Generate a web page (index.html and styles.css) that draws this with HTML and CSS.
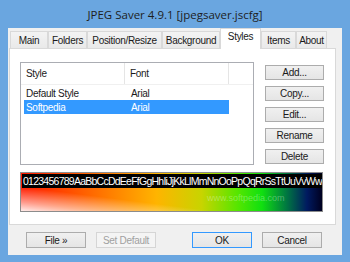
FILE: index.html
```html
<!DOCTYPE html>
<html>
<head>
<meta charset="utf-8">
<link rel="stylesheet" href="styles.css">
</head>
<body>
<div class="window">
  <div class="titlebar">JPEG Saver 4.9.1 [jpegsaver.jscfg]</div>
  <div class="client">
    <div class="tabs">
      <div class="tab w-main">Main</div>
      <div class="tab w-folders">Folders</div>
      <div class="tab w-pos">Position/Resize</div>
      <div class="tab w-bg">Background</div>
      <div class="tab active w-styles">Styles</div>
      <div class="tab w-items">Items</div>
      <div class="tab w-about">About</div>
    </div>
    <div class="panel">
      <div class="list">
        <div class="list-head">
          <div class="hcol c1">Style</div>
          <div class="hcol c2">Font</div>
        </div>
        <div class="row">
          <div class="cell c1">Default Style</div>
          <div class="cell c2">Arial</div>
        </div>
        <div class="row selected">
          <div class="cell c1">Softpedia</div>
          <div class="cell c2">Arial</div>
        </div>
      </div>
      <div class="side-buttons">
        <div class="btn">Add...</div>
        <div class="btn">Copy...</div>
        <div class="btn">Edit...</div>
        <div class="btn">Rename</div>
        <div class="btn">Delete</div>
      </div>
      <div class="preview">
        <div class="sample">0123456789AaBbCcDdEeFfGgHhIiJjKkLlMmNnOoPpQqRrSsTtUuVvWwXxYyZz</div>
        <div class="watermark">www.softpedia.com</div>
      </div>
    </div>
    <div class="bottom">
      <div class="btn wide">File »</div>
      <div class="btn wide disabled">Set Default</div>
      <div class="spacer"></div>
      <div class="btn wide default">OK</div>
      <div class="btn wide">Cancel</div>
    </div>
  </div>
</div>
</body>
</html>
```

FILE: styles.css
```css
* { box-sizing: border-box; }
html, body { margin: 0; padding: 0; }
body {
  width: 350px;
  height: 262px;
  overflow: hidden;
  font-family: "Liberation Sans", Arial, sans-serif;
  font-size: 10px;
  letter-spacing: -0.3px;
  color: #1a1a1a;
}
.window {
  width: 350px;
  height: 262px;
  background: #6aa6e0;
  display: flex;
  flex-direction: column;
}
.titlebar {
  height: 28px;
  display: flex;
  align-items: center;
  justify-content: center;
  font-family: "Open Sans", "Noto Sans", sans-serif;
  font-size: 11.5px;
  letter-spacing: 0;
  color: #1e1e1e;
  padding-top: 1px;
}
.client {
  margin: 0 8px 7px 8px;
  flex: 1;
  background: #f0f0f0;
  display: flex;
  flex-direction: column;
}
.tabs {
  display: flex;
  align-items: flex-end;
  height: 21px;
  padding-left: 2px;
  margin-bottom: -1px;
  position: relative;
  z-index: 2;
}
.tab {
  height: 17px;
  border: 1px solid #d9d9d9;
  border-bottom: none;
  background: linear-gradient(#f3f3f3, #e9e9e9);
  display: flex;
  align-items: center;
  justify-content: center;
  margin-bottom: 1px;
  padding-top: 1px;
}
.tab.active {
  height: 21px;
  background: #fff;
  margin-bottom: 0;
  align-items: flex-start;
  padding-top: 2px;
}
.w-main { width: 38px; }
.w-folders { width: 39px; }
.w-pos { width: 75px; }
.w-bg { width: 58px; }
.w-styles { width: 41px; }
.w-items { width: 35px; }
.w-about { width: 31px; }

.panel {
  margin-left: 1px;
  width: 327px;
  height: 177px;
  border: 1px solid #d9d9d9;
  background: #fff;
  padding: 13px 0 0 10px;
  display: grid;
  grid-template-columns: 234px 59px;
  grid-template-rows: 103px 40px;
  column-gap: 11px;
  row-gap: 7px;
}
.list {
  border: 1px solid #abadb3;
  background: #fff;
  overflow: hidden;
}
.list-head {
  display: flex;
  height: 22px;
  border-bottom: 1px solid #f0f0f0;
}
.hcol {
  display: flex;
  align-items: center;
  padding-left: 5px;
  border-right: 1px solid #e5e5e5;
  color: #1a1a1a;
}
.hcol.c1 { width: 104px; }
.hcol.c2 { width: 104px; }
.row {
  display: flex;
  height: 14px;
  margin-left: 3px;
  width: 205px;
  align-items: center;
  margin-top: 1px;
}
.row + .row { margin-top: 0; }
.row .c1 { width: 101px; padding-left: 2px; }
.row .c2 { width: 104px; padding-left: 6px; }
.row.selected { background: #3399ff; color: #fff; }

.side-buttons {
  display: flex;
  flex-direction: column;
  gap: 6px;
  padding-top: 3px;
}
.btn {
  height: 15px;
  border: 1px solid #acacac;
  background: linear-gradient(#f0f0f0, #e5e5e5);
  display: flex;
  align-items: center;
  justify-content: center;
  color: #1a1a1a;
}
.preview {
  grid-column: 1 / span 2;
  width: 303px;
  border: 1px solid #8c8c8c;
  padding: 1px 0 0 1px;
  position: relative;
  overflow: hidden;
  background:
    linear-gradient(to top right, rgba(255,255,255,0.92) 0%, rgba(255,255,255,0.55) 12%, rgba(255,255,255,0) 32%),
    linear-gradient(to right, #ff1a00 0%, #ff4a00 15%, #ff8000 30%, #ffb400 45%, #c8d400 60%, #55e600 72%, #10e010 80%, #007a40 88%, #001a60 95%, #000020 100%);
}
.sample {
  height: 14px;
  background: #000;
  color: #fff;
  white-space: nowrap;
  overflow: hidden;
  font-size: 10.5px;
  letter-spacing: -0.75px;
  line-height: 14px;
  padding-left: 1px;
}
.watermark {
  position: absolute;
  left: 186px;
  top: 20px;
  font-size: 9px;
  letter-spacing: 0;
  color: rgba(255,255,255,0.3);
}
.bottom {
  display: flex;
  margin-top: 7px;
  padding-left: 18px;
  gap: 10px;
}
.btn.wide { width: 60px; height: 16px; }
.spacer { width: 16px; }
.btn.disabled {
  color: #a0a0a0;
  border-color: #d5d5d5;
  background: #f4f4f4;
}
.btn.default { border-color: #3399ff; }
```
